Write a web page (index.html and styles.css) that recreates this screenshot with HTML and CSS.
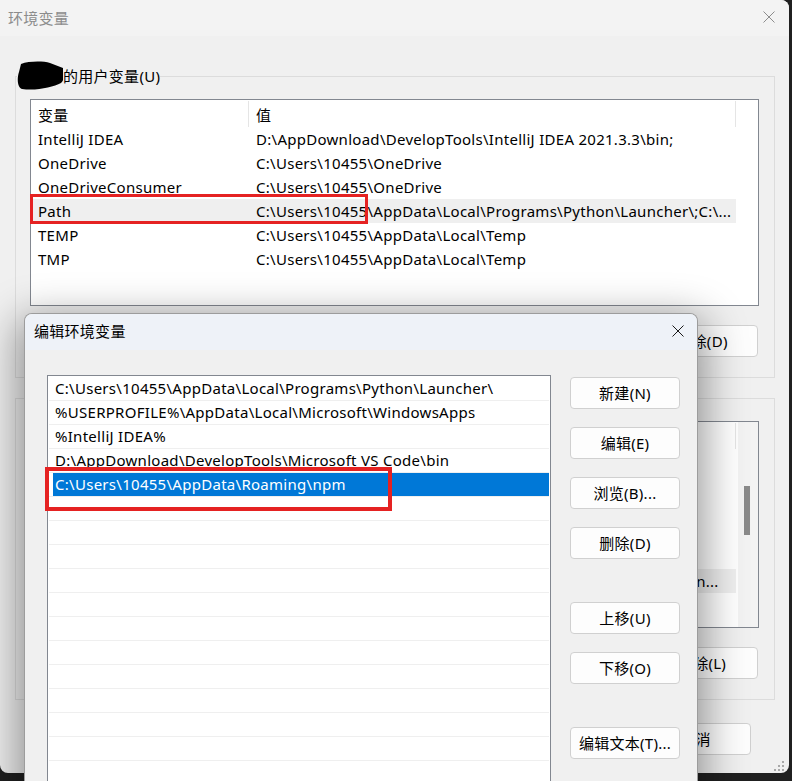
FILE: index.html
```html
<!DOCTYPE html>
<html lang="zh-CN">
<head>
    <meta charset="UTF-8">
    <title>环境变量</title>
    <link rel="stylesheet" href="styles.css">
</head>
<body>
<div class="desktop">

    <!-- background window: 环境变量 (mostly covered by the dialog) -->
    <div class="env-window">
        <div class="titlebar">
            <span class="title">环境变量</span>
            <svg class="close" width="12" height="12" viewBox="0 0 12 12"><path d="M0.5 0.5L11.5 11.5M11.5 0.5L0.5 11.5"/></svg>
        </div>
        <div class="window-body">
            <fieldset class="group">
                <legend>
                    <svg class="redact" width="46" height="30" viewBox="0 0 46 30"><path d="M4 3C12 0 26 0 33 2L46 7C48 11 48 18 44 22C36 26 20 30 5 28C0 26 0 17 2 11Z"/></svg>
                    <span>的用户变量(U)</span>
                </legend>
                <div class="listview">
                    <div class="lv-main">
                        <div class="lv-head">
                            <div class="cell c1">变量</div>
                            <div class="cell c2">值</div>
                        </div>
                        <div class="lv-row"><div class="cell c1">IntelliJ IDEA</div><div class="cell c2">D:\AppDownload\DevelopTools\IntelliJ IDEA 2021.3.3\bin;</div></div>
                        <div class="lv-row"><div class="cell c1">OneDrive</div><div class="cell c2">C:\Users\10455\OneDrive</div></div>
                        <div class="lv-row"><div class="cell c1">OneDriveConsumer</div><div class="cell c2">C:\Users\10455\OneDrive</div></div>
                        <div class="lv-row current"><div class="cell c1">Path</div><div class="cell c2">C:\Users\10455\AppData\Local\Programs\Python\Launcher\;C:\...</div></div>
                        <div class="lv-row"><div class="cell c1">TEMP</div><div class="cell c2">C:\Users\10455\AppData\Local\Temp</div></div>
                        <div class="lv-row"><div class="cell c1">TMP</div><div class="cell c2">C:\Users\10455\AppData\Local\Temp</div></div>
                    </div>
                </div>
                <div class="group-actions">
                    <button class="btn wide">删除(D)</button>
                </div>
            </fieldset>

            <!-- system variables: only the right edge shows past the dialog -->
            <fieldset class="group system">
                <div class="listview">
                    <div class="lv-main">
                        <div class="lv-head">
                            <div class="cell c1"></div>
                            <div class="cell c2"></div>
                        </div>
                        <div class="lv-row"></div>
                        <div class="lv-row"></div>
                        <div class="lv-row"></div>
                        <div class="lv-row"></div>
                        <div class="lv-row"></div>
                        <div class="lv-row current"><div class="cell c1"></div><div class="cell c2">C:\Program Files\Common Files\Oracle\Java\javapath;C:\R\bin...</div></div>
                    </div>
                    <div class="scrollbar"><div class="thumb"></div></div>
                </div>
                <div class="group-actions">
                    <button class="btn wide">删除(L)</button>
                </div>
            </fieldset>

            <div class="window-actions">
                <button class="btn">取消</button>
            </div>
        </div>
        <svg class="grip" width="12" height="12" viewBox="0 0 12 12">
            <rect x="8" y="0" width="2" height="2"/>
            <rect x="4" y="4" width="2" height="2"/><rect x="8" y="4" width="2" height="2"/>
            <rect x="0" y="8" width="2" height="2"/><rect x="4" y="8" width="2" height="2"/><rect x="8" y="8" width="2" height="2"/>
        </svg>
    </div>

    <!-- foreground dialog: 编辑环境变量 -->
    <div class="edit-dialog">
        <div class="titlebar">
            <span class="title">编辑环境变量</span>
            <svg class="close" width="12" height="12" viewBox="0 0 12 12"><path d="M0.5 0.5L11.5 11.5M11.5 0.5L0.5 11.5"/></svg>
        </div>
        <div class="dialog-body">
            <div class="path-list">
                <div class="path-item"><span class="path-text">C:\Users\10455\AppData\Local\Programs\Python\Launcher\</span></div>
                <div class="path-item"><span class="path-text">%USERPROFILE%\AppData\Local\Microsoft\WindowsApps</span></div>
                <div class="path-item"><span class="path-text">%IntelliJ IDEA%</span></div>
                <div class="path-item"><span class="path-text">D:\AppDownload\DevelopTools\Microsoft VS Code\bin</span></div>
                <div class="path-item selected"><span class="path-text">C:\Users\10455\AppData\Roaming\npm</span></div>
                <div class="path-item"><span class="path-text"></span></div>
                <div class="path-item"><span class="path-text"></span></div>
                <div class="path-item"><span class="path-text"></span></div>
                <div class="path-item"><span class="path-text"></span></div>
                <div class="path-item"><span class="path-text"></span></div>
                <div class="path-item"><span class="path-text"></span></div>
                <div class="path-item"><span class="path-text"></span></div>
                <div class="path-item"><span class="path-text"></span></div>
                <div class="path-item"><span class="path-text"></span></div>
                <div class="path-item"><span class="path-text"></span></div>
                <div class="path-item"><span class="path-text"></span></div>
                <div class="path-item"><span class="path-text"></span></div>
                <div class="path-item"><span class="path-text"></span></div>
            </div>
            <div class="dialog-actions">
                <button class="btn">新建(N)</button>
                <button class="btn">编辑(E)</button>
                <button class="btn">浏览(B)...</button>
                <button class="btn">删除(D)</button>
                <button class="btn spaced">上移(U)</button>
                <button class="btn">下移(O)</button>
                <button class="btn spaced">编辑文本(T)...</button>
            </div>
        </div>
    </div>

    <!-- red annotation boxes -->
    <div class="mark mark-path"></div>
    <div class="mark mark-npm"></div>
</div>
</body>
</html>
```

FILE: styles.css
```css
* {
    box-sizing: border-box;
}
body {
    margin: 0;
    background: #202020;
    font-family: "Noto Sans", "Noto Sans CJK SC", sans-serif;
    font-size: 15px;
    letter-spacing: 0.28px;
    color: #000;
}
.desktop {
    position: relative;
    width: 792px;
    height: 781px;
    overflow: hidden;
    background: #202020;
}

/* background window */
.env-window {
    position: absolute;
    left: 0;
    top: 0;
    width: 789px;
    height: 773px;
    background: #f0f0f0;
    border-radius: 0 8px 8px 8px;
    overflow: hidden;
}
.titlebar {
    display: flex;
    align-items: center;
    justify-content: space-between;
}
.env-window .titlebar {
    height: 36px;
    background: #f3f3f3;
    padding: 0 14px 2px 8px;
    color: #8c8c8c;
}
.close {
    display: block;
    fill: none;
    stroke: #8c8c8c;
    stroke-width: 1;
}
.window-body {
    padding: 30px 14px 0 15px;
}
.group {
    margin: 0;
    min-width: 0;
    border: 1px solid #dcdcdc;
    padding: 13px 15px 20px 14px;
}
.group.system {
    margin-top: 20px;
    padding-top: 22px;
}
.group legend {
    display: flex;
    align-items: center;
    height: 20px;
    line-height: 20px;
    padding: 0;
    margin-left: -13px;
}
.redact {
    display: block;
    margin: -5px 0;
    fill: #000;
}

.listview {
    display: flex;
    height: 207px;
    background: #fff;
    border: 1px solid #828790;
}
.lv-main {
    flex: 1;
    min-width: 0;
}
.lv-head {
    display: flex;
    height: 27px;
    align-items: stretch;
}
.lv-head .cell {
    display: flex;
    align-items: center;
    border-right: 1px solid #e5e5e5;
    margin-top: 1px;
}
.lv-row {
    display: flex;
    height: 24px;
    align-items: center;
}
.lv-row.current {
    background: #efefef;
    width: 705px;
}
.cell {
    padding-left: 7px;
    white-space: nowrap;
    overflow: hidden;
}
.c1 {
    width: 218px;
    flex: none;
}
.c2 {
    width: 487px;
    flex: none;
}
.scrollbar {
    width: 20px;
    flex: none;
    background: #f3f3f3;
    padding: 64px 0 0 6px;
}
.thumb {
    width: 6px;
    height: 49px;
    background: #8a8a8a;
}

.btn {
    height: 32px;
    padding: 0 0 2px;
    border: 1px solid #d0d0d0;
    border-radius: 4px;
    background: #fdfdfd;
    font: inherit;
    letter-spacing: inherit;
    color: #000;
}
.group-actions {
    display: flex;
    justify-content: flex-end;
    gap: 10px;
    margin-top: 19px;
    padding-right: 1px;
}
.group-actions .btn {
    width: 112px;
}
.window-actions {
    display: flex;
    justify-content: flex-end;
    gap: 10px;
    margin-top: 23px;
    padding-right: 24px;
}
.window-actions .btn {
    width: 111px;
}
.grip {
    position: absolute;
    right: 3px;
    bottom: 0;
    fill: #a8a8a8;
}

/* foreground dialog */
.edit-dialog {
    position: absolute;
    left: 24px;
    top: 313px;
    width: 674px;
    height: 500px;
    background: #f0f0f0;
    border: 1px solid rgba(0, 0, 0, 0.35);
    border-radius: 8px 8px 0 0;
    box-shadow: 0 12px 40px 8px rgba(0, 0, 0, 0.38);
    overflow: hidden;
}
.edit-dialog .titlebar {
    height: 36px;
    background: #eef2f8;
    padding: 0 13px 3px 9px;
}
.edit-dialog .close {
    stroke: #1a1a1a;
}
.dialog-body {
    display: flex;
    gap: 19px;
    padding: 25px 0 0 22px;
}
.path-list {
    width: 504px;
    height: 440px;
    background: #fff;
    border: 1px solid #828790;
    padding: 1px 1px 0;
}
.path-item {
    display: flex;
    height: 24px;
    padding-left: 4px;
    border-bottom: 1px solid #efefef;
}
.path-text {
    flex: 1;
    padding-left: 2px;
    line-height: 23px;
    white-space: nowrap;
}
.path-item.selected .path-text {
    background: #0078d7;
    color: #fff;
}
.dialog-actions {
    display: flex;
    flex-direction: column;
    gap: 18px;
    width: 110px;
    padding-top: 2px;
}
.dialog-actions .btn.spaced {
    margin-top: 25px;
}

/* annotation */
.mark {
    position: absolute;
    border: 3px solid #e52222;
}
.mark-path {
    left: 30px;
    top: 194px;
    width: 338px;
    height: 30px;
}
.mark-npm {
    left: 45px;
    top: 467px;
    width: 347px;
    height: 44px;
    border-width: 4px;
}
```
